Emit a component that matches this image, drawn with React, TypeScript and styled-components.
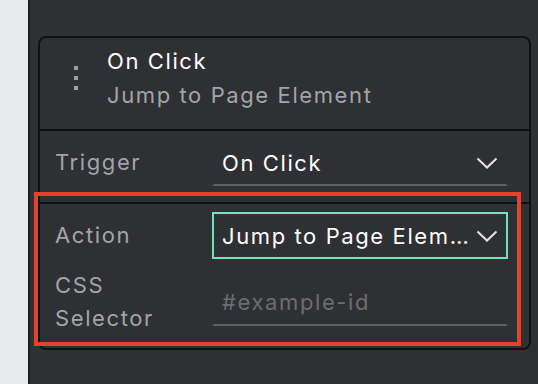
import React from 'react';
import styled, { createGlobalStyle, css } from 'styled-components';

const GlobalStyle = createGlobalStyle`
  html, body {
    margin: 0;
    padding: 0;
    background: #2f3034;
  }
  body {
    font-family: Inter, 'Open Sans', sans-serif;
  }
`;

const Page = styled.div`
  display: flex;
  width: 538px;
  height: 384px;
  overflow: hidden;
`;

const SideStrip = styled.div`
  width: 28px;
  flex-shrink: 0;
  background: #e8e9eb;
  border-right: 2px solid #1d1e21;
`;

const Panel = styled.div`
  flex: 1;
  background: #2f3034;
  padding: 36px 7px 0 8px;
`;

const Card = styled.div`
  border: 2px solid #0f1012;
  border-radius: 8px;
  color: #ffffff;
  font-size: 22px;
  letter-spacing: 1.6px;
`;

const CardHeader = styled.div`
  display: flex;
  align-items: center;
  padding: 6px 0 17px 34px;
  border-bottom: 2px solid #0f1012;
`;

const Handle = styled.div`
  display: flex;
  flex-direction: column;
  gap: 6px;
  width: 4px;
  margin-right: 29px;

  span {
    width: 4px;
    height: 4px;
    background: #9c9da1;
  }
`;

const HeaderText = styled.div`
  display: flex;
  flex-direction: column;
  line-height: 34px;
`;

const Title = styled.div`
  color: #ffffff;
`;

const Subtitle = styled.div`
  color: #a3a4a8;
`;

const Section = styled.div<{ $gap?: number; $bottom: number }>`
  display: flex;
  flex-direction: column;
  gap: ${(p) => p.$gap ?? 0}px;
  padding: 8px 21px ${(p) => p.$bottom}px 15px;
`;

const Highlight = styled.div`
  position: relative;
  border-top: 2px solid #0f1012;

  &::after {
    content: '';
    position: absolute;
    top: -12px;
    left: -6px;
    right: 8px;
    bottom: 2px;
    border: 4px solid #e6412b;
    pointer-events: none;
  }
`;

const Row = styled.div`
  display: grid;
  grid-template-columns: 157px 296px;
  align-items: center;
`;

const Label = styled.div`
  color: #a3a4a8;
  line-height: 33px;
`;

const fieldVariants = {
  underline: css`
    border-color: transparent transparent #5e5f63 transparent;
  `,
  focused: css`
    border-color: #72e3b6;
  `,
};

const Field = styled.div<{ $variant: 'underline' | 'focused' }>`
  display: flex;
  align-items: center;
  height: 47px;
  box-sizing: border-box;
  border: 2px solid transparent;
  padding: 0 8px 0 8px;
  ${(p) => fieldVariants[p.$variant]}
`;

const Value = styled.span<{ $placeholder?: boolean }>`
  flex: 1;
  min-width: 0;
  overflow: hidden;
  white-space: nowrap;
  text-overflow: ellipsis;
  color: ${(p) => (p.$placeholder ? '#6c6d71' : '#ffffff')};
`;

const Chevron = () => (
  <svg width="22" height="12" viewBox="0 0 22 12" style={{ flexShrink: 0, marginLeft: 4 }}>
    <polyline points="1.5,1.5 11,10.5 20.5,1.5" fill="none" stroke="#e4e4e6" strokeWidth="2" />
  </svg>
);

export default function App() {
  return (
    <Page>
      <GlobalStyle />
      <SideStrip />
      <Panel>
        <Card>
          <CardHeader>
            <Handle>
              <span />
              <span />
              <span />
            </Handle>
            <HeaderText>
              <Title>On Click</Title>
              <Subtitle>Jump to Page Element</Subtitle>
            </HeaderText>
          </CardHeader>
          <Section $bottom={16}>
            <Row>
              <Label>Trigger</Label>
              <Field $variant="underline">
                <Value>On Click</Value>
                <Chevron />
              </Field>
            </Row>
          </Section>
          <Highlight>
            <Section $gap={10} $bottom={13}>
              <Row>
                <Label>Action</Label>
                <Field $variant="focused">
                  <Value>Jump to Page Element</Value>
                  <Chevron />
                </Field>
              </Row>
              <Row>
                <Label>
                  CSS
                  <br />
                  Selector
                </Label>
                <Field $variant="underline">
                  <Value $placeholder>#example-id</Value>
                </Field>
              </Row>
            </Section>
          </Highlight>
        </Card>
      </Panel>
    </Page>
  );
}
